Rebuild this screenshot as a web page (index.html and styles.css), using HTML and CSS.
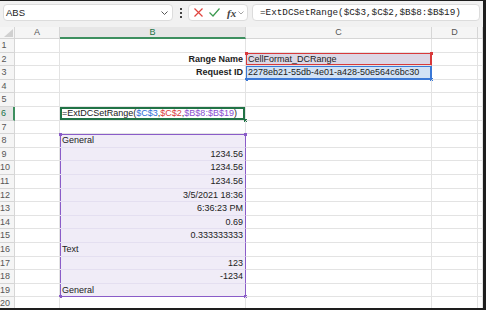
FILE: index.html
```html
<!DOCTYPE html>
<html lang="en">
<head>
    <meta charset="UTF-8">
    <meta name="viewport" content="width=device-width, initial-scale=1.0">
    <title>ExtDCSetRange</title>
    <link rel="stylesheet" href="styles.css">
</head>
<body>
    <div class="window">
        <!-- Formula bar -->
        <div class="toolbar">
            <div class="name-box">
                <span>ABS</span>
                <svg class="chev" width="7" height="4" viewBox="0 0 7 4"><polyline points="0.5,0.5 3.5,3.5 6.5,0.5" fill="none" stroke="#555" stroke-width="1"/></svg>
            </div>
            <div class="grip">
                <span></span><span></span><span></span>
            </div>
            <div class="fx-box">
                <svg width="9" height="9" viewBox="0 0 9 9"><path d="M0.5 0.5 L8.5 8.5 M8.5 0.5 L0.5 8.5" stroke="#e0443e" stroke-width="1.2" fill="none"/></svg>
                <svg width="11" height="9" viewBox="0 0 11 9"><polyline points="0.5,4.5 4,8 10.5,0.5" stroke="#3c9a50" stroke-width="1.2" fill="none"/></svg>
                <span class="fx">fx</span>
                <svg width="6" height="4" viewBox="0 0 6 4"><polyline points="0.5,0.5 3,3 5.5,0.5" fill="none" stroke="#999" stroke-width="0.9"/></svg>
            </div>
            <div class="formula">=ExtDCSetRange($C$3,$C$2,$B$8:$B$19)</div>
        </div>

        <!-- Sheet -->
        <div class="sheet">
            <div class="c hd corner"><svg width="9" height="8" viewBox="0 0 9 8"><polygon points="9,0 9,8 0,8" fill="#d0d0d0"/></svg></div>
            <div class="c hd">A</div>
            <div class="c hd hd-active">B</div>
            <div class="c hd">C</div>
            <div class="c hd">D</div>
            <div class="c hd"></div>

            <div class="c rh">1</div><div class="c"></div><div class="c"></div><div class="c"></div><div class="c"></div><div class="c"></div>

            <div class="c rh">2</div><div class="c"></div>
            <div class="c label">Range Name</div>
            <div class="c ref-red">CellFormat_DCRange<i class="h tl"></i><i class="h tr"></i></div>
            <div class="c"></div><div class="c"></div>

            <div class="c rh">3</div><div class="c"></div>
            <div class="c label">Request ID</div>
            <div class="c ref-blue">2278eb21-55db-4e01-a428-50e564c6bc30<i class="h bl"></i><i class="h br"></i></div>
            <div class="c"></div><div class="c"></div>

            <div class="c rh">4</div><div class="c"></div><div class="c"></div><div class="c"></div><div class="c"></div><div class="c"></div>
            <div class="c rh">5</div><div class="c"></div><div class="c"></div><div class="c"></div><div class="c"></div><div class="c"></div>

            <div class="c rh rh-active">6</div><div class="c"></div>
            <div class="c active">=ExtDCSetRange(<span class="t-blue">$C$3</span>,<span class="t-red">$C$2</span>,<span class="t-purple">$B$8:$B$19</span>)<i class="h br"></i></div>
            <div class="c"></div><div class="c"></div><div class="c"></div>

            <div class="c rh">7</div><div class="c"></div><div class="c"></div><div class="c"></div><div class="c"></div><div class="c"></div>

            <div class="c rh">8</div><div class="c"></div>
            <div class="c pr pr-first">General<i class="h tl"></i><i class="h tr"></i></div>
            <div class="c"></div><div class="c"></div><div class="c"></div>

            <div class="c rh">9</div><div class="c"></div><div class="c pr num">1234.56</div><div class="c"></div><div class="c"></div><div class="c"></div>
            <div class="c rh">10</div><div class="c"></div><div class="c pr num">1234.56</div><div class="c"></div><div class="c"></div><div class="c"></div>
            <div class="c rh">11</div><div class="c"></div><div class="c pr num">1234.56</div><div class="c"></div><div class="c"></div><div class="c"></div>
            <div class="c rh">12</div><div class="c"></div><div class="c pr num">3/5/2021 18:36</div><div class="c"></div><div class="c"></div><div class="c"></div>
            <div class="c rh">13</div><div class="c"></div><div class="c pr num">6:36:23 PM</div><div class="c"></div><div class="c"></div><div class="c"></div>
            <div class="c rh">14</div><div class="c"></div><div class="c pr num">0.69</div><div class="c"></div><div class="c"></div><div class="c"></div>
            <div class="c rh">15</div><div class="c"></div><div class="c pr num">0.333333333</div><div class="c"></div><div class="c"></div><div class="c"></div>
            <div class="c rh">16</div><div class="c"></div><div class="c pr">Text</div><div class="c"></div><div class="c"></div><div class="c"></div>
            <div class="c rh">17</div><div class="c"></div><div class="c pr num">123</div><div class="c"></div><div class="c"></div><div class="c"></div>
            <div class="c rh">18</div><div class="c"></div><div class="c pr num">-1234</div><div class="c"></div><div class="c"></div><div class="c"></div>

            <div class="c rh">19</div><div class="c"></div>
            <div class="c pr pr-last">General<i class="h bl"></i><i class="h br"></i></div>
            <div class="c"></div><div class="c"></div><div class="c"></div>

            <div class="c rh">20</div><div class="c"></div><div class="c"></div><div class="c"></div><div class="c"></div><div class="c"></div>
        </div>
    </div>
</body>
</html>
```

FILE: styles.css
```css
/* --- Page --- */
body {
    margin: 0;
    font-family: "Liberation Sans", Arial, sans-serif;
    background: #ffffff;
}

.window {
    width: 486px;
    height: 310px;
    box-sizing: border-box;
    border-top: 1px solid #1e1e1e;
    border-right: 3px solid #1e1e1e;
    border-bottom: 2px solid #1e1e1e;
    overflow: hidden;
    background: #ffffff;
}

/* --- Formula Bar --- */
.toolbar {
    display: flex;
    align-items: flex-start;
    height: 26px;
    box-sizing: border-box;
    padding: 3px 0 0 3px;
    background: #f1f1f1;
}

.name-box,
.fx-box,
.formula {
    height: 17px;
    box-sizing: border-box;
    background: #ffffff;
    border: 1px solid #dcdcdc;
    border-radius: 4px;
}

.name-box {
    width: 170px;
    display: flex;
    align-items: center;
    justify-content: space-between;
    padding: 0 4px 0 2px;
    font-size: 9.5px;
    color: #222;
}

.grip {
    width: 15px;
    display: flex;
    flex-direction: column;
    align-items: center;
    gap: 2px;
    padding-top: 4px;
}

.grip span {
    width: 2px;
    height: 2px;
    background: #444;
}

.fx-box {
    width: 60px;
    display: flex;
    align-items: center;
    gap: 6px;
    padding-left: 5px;
}

.fx {
    font-family: "Liberation Serif", "Times New Roman", serif;
    font-style: italic;
    font-weight: bold;
    font-size: 11px;
    color: #444;
    margin-left: 1px;
    margin-right: -4px;
}

.formula {
    width: 228px;
    margin-left: 4px;
    padding-left: 7px;
    font-family: "Liberation Mono", "Courier New", monospace;
    font-size: 9.3px;
    line-height: 15px;
    color: #222;
    white-space: nowrap;
    overflow: hidden;
}

/* --- Sheet Grid --- */
.sheet {
    display: grid;
    grid-template-columns: 15px 45px 186px 186px 46px 1fr;
    grid-template-rows: 12px;
    grid-auto-rows: 13.6px;
}

.c {
    position: relative;
    box-sizing: border-box;
    border-right: 1px solid #e3e3e3;
    border-bottom: 1px solid #e3e3e3;
    padding: 0 2px;
    font-size: 9px;
    line-height: 13.5px;
    color: #222;
    white-space: nowrap;
}

/* --- Headers --- */
.hd {
    background: #f5f5f5;
    border-color: #d6d6d6;
    text-align: center;
    font-size: 9px;
    line-height: 11px;
    color: #555;
}

.corner {
    display: flex;
    justify-content: flex-end;
    align-items: flex-end;
    padding: 0 1px 1px 0;
}

.hd-active {
    color: #217346;
    border-bottom: 2px solid #3d8f5f;
    background: #e6e6e6;
}

.rh {
    background: #f5f5f5;
    border-color: #d6d6d6;
    padding: 0 6px 0 0;
    text-align: center;
    font-size: 9px;
    line-height: 13px;
    color: #555;
}

.rh-active {
    color: #217346;
    background: #e6e6e6;
    border-right: 2px solid #3d8f5f;
}

/* --- Cell Content --- */
.label {
    text-align: right;
    font-weight: bold;
}

.num {
    text-align: right;
}

.t-blue { color: #2f6fd8; }
.t-red { color: #d8393b; }
.t-purple { color: #8a4fd0; }

/* --- Reference Highlights --- */
.ref-red {
    background: #dcd7e5;
    box-shadow: inset 0 0 0 1px #d8393b;
    border-right-color: #d8393b;
}

.ref-blue {
    background: #d2e2f5;
    box-shadow: inset 0 0 0 1px #3a78d6;
    border-right-color: #3a78d6;
    border-bottom-color: #3a78d6;
}

.active {
    box-shadow: inset 0 0 0 2px #217346;
}

.pr {
    background: #f0ecf7;
    border-bottom-color: #e4dff0;
    border-right-color: #8a5cc8;
    box-shadow: inset 1px 0 #8a5cc8;
}

.pr-first {
    box-shadow: inset 1px 0 #8a5cc8, inset 0 1px #8a5cc8;
}

.pr-last {
    border-bottom-color: #8a5cc8;
}

/* --- Corner Handles --- */
.h {
    position: absolute;
    width: 3px;
    height: 3px;
}

.h.tl { left: -1px; top: -1px; }
.h.tr { right: -2px; top: -1px; }
.h.bl { left: -1px; bottom: -2px; }
.h.br { right: -2px; bottom: -2px; }

.ref-red .h { background: #d8393b; }
.ref-blue .h { background: #3a78d6; }
.pr .h { background: #8a5cc8; }
.active .h { background: #217346; }
```
